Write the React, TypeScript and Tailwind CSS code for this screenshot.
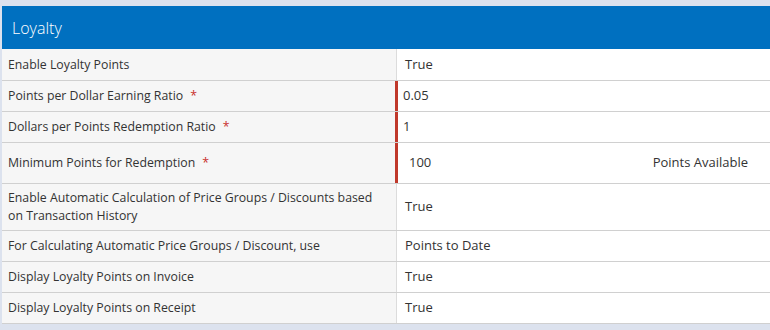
const ROWS: { label: string; value: string; required?: boolean; h: string; extra?: string; input?: boolean }[] = [
  { label: "Enable Loyalty Points", value: "True", h: "h-[31px]" },
  { label: "Points per Dollar Earning Ratio", value: "0.05", required: true, h: "h-[31px]" },
  { label: "Dollars per Points Redemption Ratio", value: "1", required: true, h: "h-[31px]" },
  {
    label: "Minimum Points for Redemption",
    value: "100",
    required: true,
    h: "h-[41px]",
    extra: "Points Available",
    input: true,
  },
  {
    label: "Enable Automatic Calculation of Price Groups / Discounts based on Transaction History",
    value: "True",
    h: "h-[47px]",
  },
  { label: "For Calculating Automatic Price Groups / Discount, use", value: "Points to Date", h: "h-[31px]" },
  { label: "Display Loyalty Points on Invoice", value: "True", h: "h-[31px]" },
  { label: "Display Loyalty Points on Receipt", value: "True", h: "h-[31px]" },
];

export default function App() {
  return (
    <div
      className="w-[770px] h-[330px] bg-[#dce2ee] pt-[6px] pl-[2px] overflow-hidden text-[#333] text-[13px]"
      style={{ fontFamily: '"Open Sans", "Liberation Sans", sans-serif' }}
    >
      <div className="bg-white">
        <div className="h-[43px] bg-[#0070c0] flex items-center pl-[10px] text-white text-[16px] font-light">
          Loyalty
        </div>
        {ROWS.map((r, i) => (
          <div
            key={r.label}
            className={`grid grid-cols-[394px_1fr] ${r.h} ${i > 0 ? "border-t border-[#d0d0d0]" : ""}`}
          >
            <div className="bg-[#f6f6f6] flex items-center pl-[6px] pr-[6px] text-[12.3px] leading-[18px]">
              <span>
                {r.label}
                {r.required && <span className="text-[#c9302c] ml-[7px]">*</span>}
              </span>
            </div>
            {r.required ? (
              <div className="border-l-[3px] border-[#c0392b] -ml-[1px] flex items-center pr-[22px]">
                <span className={r.input ? "pl-[11px]" : "pl-[5px]"}>{r.value}</span>
                {r.extra && <span className="ml-auto">{r.extra}</span>}
              </div>
            ) : (
              <div className="border-l border-[#dcdcdc] flex items-center pl-[8px]">{r.value}</div>
            )}
          </div>
        ))}
        <div className="border-t border-[#d0d0d0]" />
      </div>
    </div>
  );
}
